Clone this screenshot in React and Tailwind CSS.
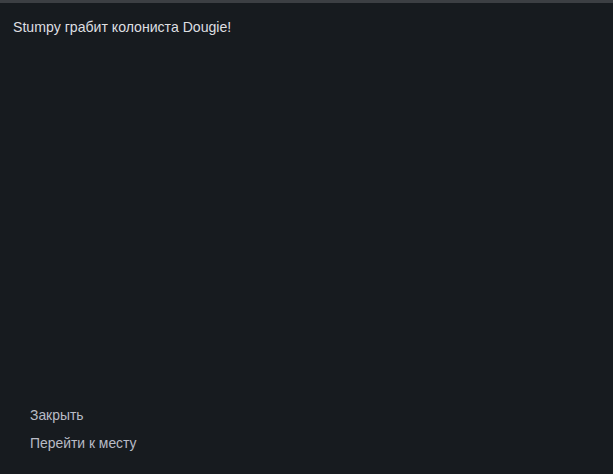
export default function App() {
  return (
    <div className="w-[613px] h-[474px] bg-[#171b1f] flex flex-col overflow-hidden" style={{ fontFamily: '"Liberation Sans", Arial, sans-serif' }}>
      <div className="h-[3px] bg-[#3c3f43] shrink-0" />
      <div className="pl-[13px] pt-[16px] text-[14.1px] leading-[17px] text-[#dedfe1]">
        Stumpy грабит колониста Dougie!
      </div>
      <div className="flex-1" />
      <div className="flex flex-col pl-[30px] pb-[22px] gap-[11px] text-[13.9px] leading-[17px] text-[#b9bcc6]">
        <div>Закрыть</div>
        <div>Перейти к месту</div>
      </div>
    </div>
  );
}
